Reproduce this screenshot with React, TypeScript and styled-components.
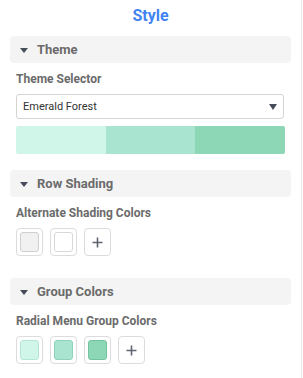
import React from "react";
import styled, { createGlobalStyle } from "styled-components";

const Global = createGlobalStyle`
  html, body { margin: 0; padding: 0; background: #fff; }
  body { font-family: Roboto, "Liberation Sans", Arial, sans-serif; }
`;

const Panel = styled.div`
  width: 281px;
  min-height: 378px;
  padding: 0 10px;
  border-right: 1px solid #e8e8e8;
  box-sizing: content-box;
`;

const Title = styled.div`
  height: 36px;
  padding-top: 6px;
  box-sizing: border-box;
  text-align: center;
  font-size: 16px;
  font-weight: 700;
  color: #3f84f2;
  line-height: 20px;
`;

const Section = styled.section<{ $gap: number }>`
  margin-bottom: ${(p) => p.$gap}px;
`;

const Header = styled.div`
  height: 27px;
  background: #f4f4f4;
  border-radius: 4px;
  display: flex;
  align-items: center;
  padding-left: 10px;
  gap: 9px;
  font-size: 13px;
  font-weight: 700;
  color: #6b6b6b;
`;

const Caret = styled.span`
  width: 0;
  height: 0;
  border-left: 4px solid transparent;
  border-right: 4px solid transparent;
  border-top: 5px solid #474c5a;
  margin-top: 2px;
`;

const Body = styled.div`
  padding: 8px 6px 0;
`;

const Label = styled.div`
  font-size: 12px;
  font-weight: 700;
  color: #6b6b6b;
  line-height: 16px;
  margin-bottom: 7px;
`;

const Select = styled.div`
  height: 25px;
  border: 1px solid #d4d4d4;
  border-radius: 3px;
  display: flex;
  align-items: center;
  justify-content: space-between;
  padding: 0 6px 0 6px;
  box-sizing: border-box;
  font-size: 11px;
  color: #333;
  margin-right: 1px;
`;

const Arrow = styled.span`
  width: 0;
  height: 0;
  border-left: 4px solid transparent;
  border-right: 4px solid transparent;
  border-top: 6px solid #474c5a;
`;

const Bar = styled.div`
  margin-top: 7px;
  height: 28px;
  display: flex;
  border-radius: 2px;
  overflow: hidden;
`;

const Seg = styled.div<{ $c: string }>`
  flex: 1;
  background: ${(p) => p.$c};
`;

const Swatches = styled.div`
  display: flex;
  gap: 7px;
`;

const Swatch = styled.div`
  width: 27px;
  height: 28px;
  box-sizing: border-box;
  border: 1px solid #dcdcdc;
  border-radius: 4px;
  padding: 3px;
  display: flex;
  align-items: center;
  justify-content: center;
`;

const Fill = styled.div<{ $c: string; $b: string }>`
  width: 100%;
  height: 100%;
  box-sizing: border-box;
  background: ${(p) => p.$c};
  border: 1px solid ${(p) => p.$b};
  border-radius: 3px;
`;

const PlusBox = styled(Swatch)`
  color: #5f6470;
`;

const PlusIcon = () => (
  <svg width="11" height="11" viewBox="0 0 11 11">
    <path d="M5.5 0.5v10M0.5 5.5h10" stroke="#5f6470" strokeWidth="1.6" />
  </svg>
);

const greens = [
  { c: "#d0f6e9", b: "#b4e6d3" },
  { c: "#a8e4d0", b: "#8fd2bb" },
  { c: "#8dd7b7", b: "#72c49f" },
];

export default function App() {
  return (
    <>
      <Global />
      <Panel>
        <Title>Style</Title>
        <Section $gap={16}>
          <Header>
            <Caret />
            Theme
          </Header>
          <Body>
            <Label>Theme Selector</Label>
            <Select>
              <span>Emerald Forest</span>
              <Arrow />
            </Select>
            <Bar>
              <Seg $c="#d0f6e9" />
              <Seg $c="#a8e4d0" />
              <Seg $c="#8dd7b7" />
            </Bar>
          </Body>
        </Section>
        <Section $gap={22}>
          <Header>
            <Caret />
            Row Shading
          </Header>
          <Body>
            <Label>Alternate Shading Colors</Label>
            <Swatches>
              <Swatch>
                <Fill $c="#f1f1f1" $b="#d0d0d0" />
              </Swatch>
              <Swatch>
                <Fill $c="#ffffff" $b="#d8d8d8" />
              </Swatch>
              <PlusBox>
                <PlusIcon />
              </PlusBox>
            </Swatches>
          </Body>
        </Section>
        <Section $gap={0}>
          <Header>
            <Caret />
            Group Colors
          </Header>
          <Body>
            <Label>Radial Menu Group Colors</Label>
            <Swatches>
              {greens.map((g) => (
                <Swatch key={g.c}>
                  <Fill $c={g.c} $b={g.b} />
                </Swatch>
              ))}
              <PlusBox>
                <PlusIcon />
              </PlusBox>
            </Swatches>
          </Body>
        </Section>
      </Panel>
    </>
  );
}
